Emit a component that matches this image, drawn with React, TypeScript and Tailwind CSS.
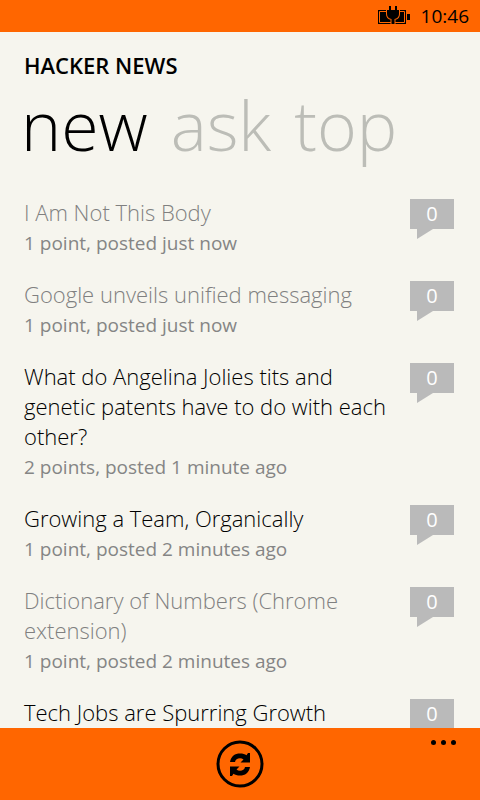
import React from "react";

type Story = { title: string; meta?: string; read: boolean; comments: number };

const stories: Story[] = [
  { title: "I Am Not This Body", meta: "1 point, posted just now", read: true, comments: 0 },
  { title: "Google unveils unified messaging", meta: "1 point, posted just now", read: true, comments: 0 },
  {
    title: "What do Angelina Jolies tits and genetic patents have to do with each other?",
    meta: "2 points, posted 1 minute ago",
    read: false,
    comments: 0,
  },
  { title: "Growing a Team, Organically", meta: "1 point, posted 2 minutes ago", read: false, comments: 0 },
  { title: "Dictionary of Numbers (Chrome extension)", meta: "1 point, posted 2 minutes ago", read: true, comments: 0 },
  { title: "Tech Jobs are Spurring Growth", read: false, comments: 0 },
];

function BatteryIcon() {
  return (
    <svg width="32" height="20" viewBox="0 0 32 20" aria-label="Battery charging" role="img">
      <path d="M0 4h28v14H0z" fill="#000" />
      <path d="M1.5 5.5h25v11h-25z" fill="none" stroke="#ff6600" strokeWidth="1" />
      <path d="M29 8h3v6h-3z" fill="#000" />
      <path
        d="M11 0h2v4h4V0h2v4h2v4c0 3-2 4.500-4.500 5v5h-3v-5C11 12.500 9 11 9 8V4h2z"
        fill="#000"
        stroke="#ff6600"
        strokeWidth="2"
        paintOrder="stroke"
      />
    </svg>
  );
}

const arrow =
  "M14 22c1-6 5-8.500 10-8.500 2.700 0 5 .6 6.500 1.800L32 13h2v9.500h-9.500l3-3c-1-.8-2.200-1.200-3.500-1.200-2.700 0-4.500 1.200-5 3.700z";

function RefreshIcon() {
  return (
    <svg width="48" height="48" viewBox="0 0 48 48" aria-hidden="true">
      <circle cx="24" cy="24" r="22" fill="none" stroke="#000" strokeWidth="3" />
      <path d={arrow} />
      <path d={arrow} transform="rotate(180 24 24.5)" />
    </svg>
  );
}

function CommentBadge({ count }: { count: number }) {
  return (
    <a href="#comments" aria-label={`${count} comments`} className="mt-1 block w-11 shrink-0 text-center text-white">
      <span className="block h-[30px] bg-[#bababa] text-xl leading-[30px]">{count}</span>
      <svg className="ml-[7px] block" width="16" height="10" viewBox="0 0 16 10" aria-hidden="true">
        <path d="M0 0h16L0 10z" fill="#bababa" />
      </svg>
    </a>
  );
}

export default function App() {
  return (
    <div className="flex h-screen flex-col overflow-hidden bg-[#f6f5ee] font-['Open_Sans','Noto_Sans',sans-serif] text-black">
      <div className="flex h-8 shrink-0 items-center justify-end gap-[11px] bg-[#ff6600] pr-[11px]">
        <BatteryIcon />
        <span className="text-[19px] leading-[30px]">10:46</span>
      </div>

      <header className="shrink-0 px-6 pt-[18px]">
        <h1 className="text-[22px] leading-[30px] font-semibold">HACKER NEWS</h1>
        <nav className="-mt-1 -ml-[3px] flex gap-[23px] text-[68px] leading-[98px] font-light whitespace-nowrap">
          <button type="button">new</button>
          <button type="button" className="text-[#bcbdb7]">ask</button>
          <button type="button" className="text-[#bcbdb7]">top</button>
        </nav>
      </header>

      <main className="min-h-0 flex-1 overflow-hidden pt-[21px] pr-[26px] pl-6">
        <ul className="flex flex-col gap-[19px]">
          {stories.map((story) => (
            <li key={story.title} className="flex justify-between gap-4">
              <div className="flex min-w-0 flex-1 flex-col gap-px pt-0.5">
                <h2 className="text-[22px] leading-[30px] font-light">
                  <a href="#story" className={story.read ? "text-[#808080]" : "text-black"}>
                    {story.title}
                  </a>
                </h2>
                {story.meta && <p className="text-[19px] leading-[30px] text-[#858585]">{story.meta}</p>}
              </div>
              <CommentBadge count={story.comments} />
            </li>
          ))}
        </ul>
      </main>

      <footer className="grid h-[72px] shrink-0 grid-cols-[1fr_auto_1fr] items-center bg-[#ff6600]">
        <span />
        <button type="button" aria-label="Refresh">
          <RefreshIcon />
        </button>
        <button type="button" aria-label="More" className="flex gap-[5px] self-start justify-self-end pt-3 pr-6">
          <span className="size-[5px] rounded-full bg-black" />
          <span className="size-[5px] rounded-full bg-black" />
          <span className="size-[5px] rounded-full bg-black" />
        </button>
      </footer>
    </div>
  );
}
